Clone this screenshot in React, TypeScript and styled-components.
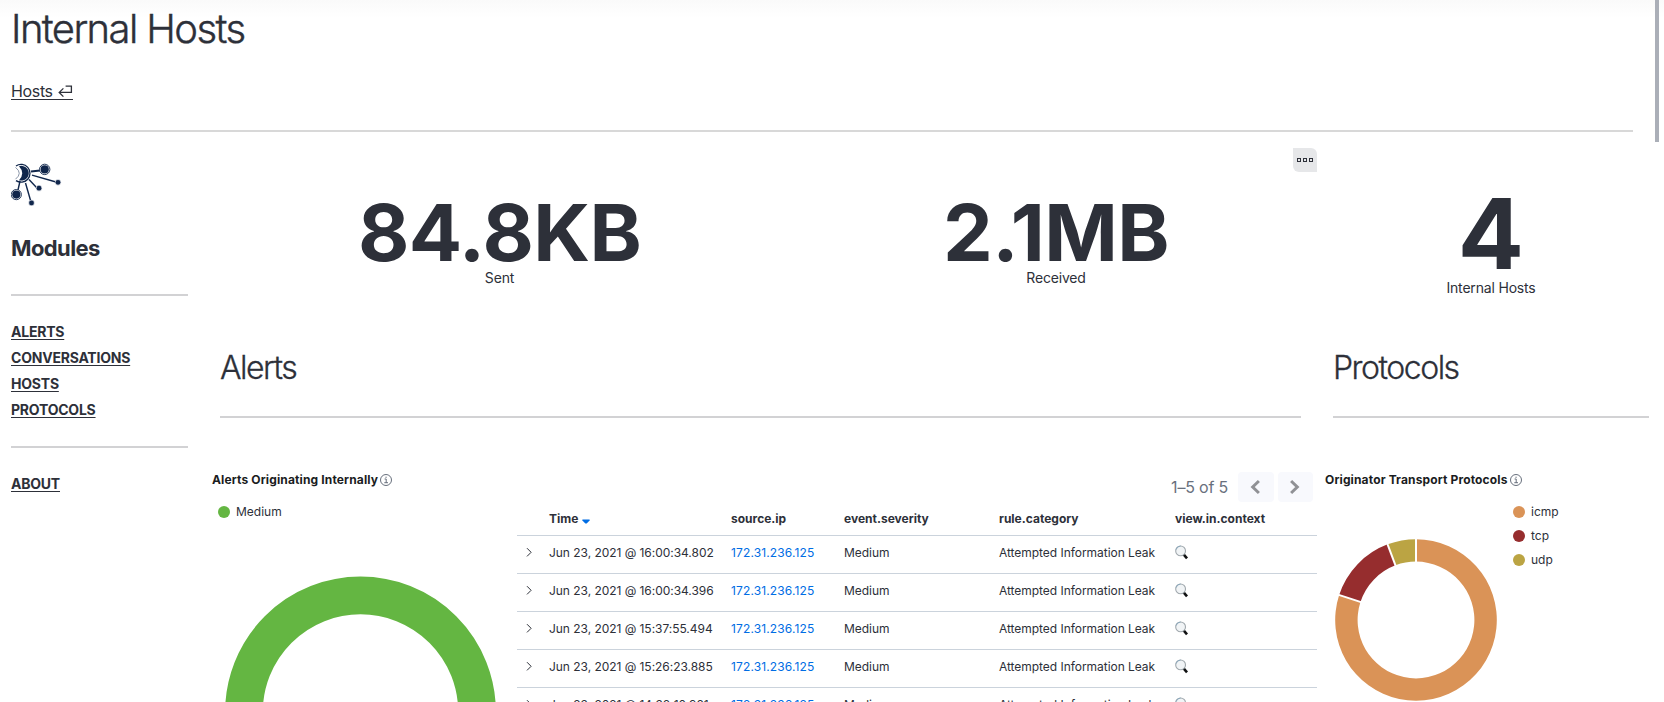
import React from "react";
import styled, { createGlobalStyle } from "styled-components";

const Global = createGlobalStyle`
  * { box-sizing: border-box; }
  html, body { margin: 0; padding: 0; overflow: hidden; }
  body {
    font-family: Inter, "Liberation Sans", sans-serif;
    color: #2d3039;
    background: #fff;
    -webkit-font-smoothing: antialiased;
  }
  h1, h2, h3, p { margin: 0; font-weight: inherit; }
  svg { display: block; flex: none; }
`;

const Page = styled.div`
  position: relative;
  width: 1664px;
  height: 702px;
  overflow: hidden;
  background: linear-gradient(#fafafa, #fff 18px);
`;

const ScrollThumb = styled.div`
  position: absolute;
  top: 0;
  right: 5px;
  width: 4px;
  height: 142px;
  background: #abafb8;
`;

const Header = styled.header`
  height: 132px;
  margin: 0 31px 0 11px;
  border-bottom: 2px solid #d8d8d8;
`;

const Title = styled.h1`
  padding-top: 4px;
  font-size: 40px;
  line-height: 50px;
  font-weight: 300;
  letter-spacing: -1.6px;
  -webkit-text-stroke: 0.4px currentColor;
  white-space: nowrap;
`;

const Crumb = styled.a`
  display: inline-flex;
  align-items: center;
  gap: 5px;
  height: 19px;
  margin-top: 27px;
  padding-top: 2px;
  border-bottom: 1px solid #2d3039;
  font-size: 16px;
  line-height: 24px;
  letter-spacing: -0.35px;
`;

const Body = styled.div`
  display: flex;
  align-items: flex-start;
  height: 570px;
`;

const Sidebar = styled.nav`
  width: 177px;
  margin: 31px 24px 0 11px;
`;

const SideTitle = styled.h2`
  height: 88px;
  padding-top: 25px;
  border-bottom: 2px solid #d2d2d4;
  font-size: 22px;
  line-height: 30px;
  font-weight: 700;
  letter-spacing: -0.6px;
`;

const SideLinks = styled.div<{ $last?: boolean }>`
  display: flex;
  flex-direction: column;
  height: 152px;
  padding-top: 23px;
  border-bottom: ${(p) => (p.$last ? "none" : "2px solid #d2d2d4")};
`;

const SideLink = styled.a`
  height: 26px;
  font-size: 14px;
  line-height: 26px;
  font-weight: 700;
  letter-spacing: -0.22px;
  text-decoration: underline;
  text-underline-offset: 2px;
  text-decoration-thickness: 1px;
`;

const Column = styled.section<{ $width: number; $gap?: number }>`
  width: ${(p) => p.$width}px;
  margin-right: ${(p) => p.$gap ?? 0}px;
`;

const MetricRow = styled.div`
  position: relative;
  display: flex;
  height: 194px;
`;

const Metric = styled.div<{ $width: number; $top: number }>`
  flex: none;
  width: ${(p) => p.$width}px;
  padding-top: ${(p) => p.$top}px;
  text-align: center;
`;

const MetricValue = styled.div<{ $size: number; $height: number; $spacing?: number }>`
  height: ${(p) => p.$height}px;
  font-size: ${(p) => p.$size}px;
  line-height: ${(p) => p.$size}px;
  letter-spacing: ${(p) => p.$spacing ?? 0}px;
  font-weight: 700;
  white-space: nowrap;
`;

const MetricLabel = styled.div`
  font-size: 14px;
  line-height: 20px;
  letter-spacing: -0.18px;
`;

const PanelMenu = styled.button`
  position: absolute;
  top: 16px;
  right: 0;
  display: flex;
  align-items: center;
  justify-content: center;
  gap: 2px;
  width: 24px;
  height: 24px;
  padding: 0;
  border: 0;
  border-radius: 0 6px 0 6px;
  background: #e6e7e9;
  i { width: 4px; height: 4px; border: 1px solid #2d3039; }
`;

const SectionTitle = styled.h2<{ $right: number }>`
  height: 92px;
  margin: 0 ${(p) => p.$right}px 0 8px;
  padding-top: 22px;
  border-bottom: 2px solid #d2d2d4;
  font-size: 32px;
  line-height: 40px;
  font-weight: 300;
  letter-spacing: -1.5px;
  -webkit-text-stroke: 0.3px currentColor;
`;

const PanelBody = styled.div`
  display: flex;
  height: 284px;
`;

const ChartPanel = styled.div<{ $width: number }>`
  width: ${(p) => p.$width}px;
  padding-top: 54px;
`;

const PanelTitle = styled.h3`
  display: flex;
  align-items: center;
  gap: 2px;
  height: 16px;
  font-size: 12px;
  line-height: 16px;
  font-weight: 700;
  letter-spacing: 0.14px;
  color: #1a1c21;
  white-space: nowrap;
`;

const Legend = styled.div`
  padding: 12px 0 0 6px;
`;

const LegendItem = styled.div<{ $color: string }>`
  display: flex;
  align-items: center;
  gap: 6px;
  height: 24px;
  font-size: 12px;
  line-height: 14px;
  &::before {
    content: "";
    width: 12px;
    height: 12px;
    border-radius: 50%;
    background: ${(p) => p.$color};
  }
  span { padding-bottom: 1px; }
`;

const ProtocolChart = styled.div`
  display: flex;
  gap: 10px;
  padding-left: 10px;
  svg { margin-top: 51px; }
`;

const TablePanel = styled.div`
  flex: none;
  width: 800px;
  padding-top: 54px;
`;

const Pager = styled.div`
  display: flex;
  justify-content: flex-end;
  align-items: center;
  gap: 4px;
  height: 30px;
  padding-right: 4px;
  font-size: 16px;
  color: #69707d;
  span { margin-right: 6px; letter-spacing: -0.2px; }
`;

const PagerButton = styled.button<{ $width: number }>`
  display: flex;
  align-items: center;
  justify-content: center;
  width: ${(p) => p.$width}px;
  height: 30px;
  padding: 0 2px 0 0;
  border: 0;
  border-radius: 4px;
  background: #f8f9fd;
`;

const Row = styled.div<{ $head?: boolean }>`
  display: grid;
  grid-template-columns: 32px 182px 113px 155px 176px 1fr;
  align-items: center;
  height: ${(p) => (p.$head ? 34 : 38)}px;
  padding-bottom: ${(p) => (p.$head ? 0 : 5)}px;
  border-bottom: 1px solid #cbd3dc;
  font-size: 12px;
  font-weight: ${(p) => (p.$head ? 700 : 400)};
  letter-spacing: ${(p) => (p.$head ? 0 : -0.04)}px;
  white-space: nowrap;
  > span { display: flex; align-items: center; }
`;

const ExpandCell = styled.span`
  padding: 0 0 0 9px;
`;

const SortMark = styled.i`
  padding: 5px 0 0 1px;
`;

const IpLink = styled.a`
  color: #006de4;
  letter-spacing: 0.13px;
`;

const ModulesLogo = () => (
  <svg width="51" height="45" viewBox="0 0 51 45" fill="none">
    <g stroke="#10264b" strokeWidth="1.4">
      <path d="M20 8.6 L29 7.6" strokeWidth="2" />
      <path d="M21 12.2 L45 19" />
      <path d="M18 16.5 L26 25" />
      <path d="M14.5 20 L20 39" />
      <path d="M9 18 L7 27" />
    </g>
    <circle cx="33.7" cy="6.4" r="5.2" fill="#fff" stroke="#10264b" strokeWidth=".9" />
    <circle cx="33.7" cy="6.4" r="4.1" fill="#10264b" />
    <circle cx="5.3" cy="31.6" r="5.1" fill="#fff" stroke="#10264b" strokeWidth=".9" />
    <circle cx="5.3" cy="31.6" r="4.1" fill="#10264b" />
    {[[47, 19.3], [28, 25.2], [20.5, 39.9]].map(([x, y]) => (
      <g key={x}>
        <circle cx={x} cy={y} r="3.1" fill="#c2c8d3" />
        <circle cx={x} cy={y} r="2.4" fill="#10264b" />
      </g>
    ))}
    <path d="M5 3 A8.9 8.9 0 1 1 5 17.6" stroke="#10264b" strokeWidth="1.3" />
    <path d="M8 3.2 A7.4 7.4 0 1 1 8 17.2 Q14.5 10.2 8 3.2Z" fill="#10264b" />
    <path d="M4.5 4.4 Q12 10.2 4.5 16.2" stroke="#6b7890" strokeWidth=".8" />
  </svg>
);

const ReturnIcon = () => (
  <svg width="15" height="13" viewBox="0 0 15 13" fill="none" stroke="#2d3039" strokeWidth="1.3">
    <path d="M7.6 1.2 H13.4 V7.4 H1.7 M5.4 3.4 L1.2 7.4 L5.4 11.6" />
  </svg>
);

const InfoIcon = () => (
  <svg width="12" height="12" viewBox="0 0 12 12" fill="none" stroke="#5f6775" strokeWidth=".95">
    <circle cx="6" cy="6" r="5.5" />
    <path d="M4.6 5 H6.2 V8.7 M4.3 8.7 H8" />
    <rect x="5.5" y="2.7" width="1.1" height="1.1" fill="#5f6775" stroke="none" />
  </svg>
);

const ExpandIcon = () => (
  <svg width="8" height="11" viewBox="0 0 8 11" fill="none" stroke="#2d3039" strokeWidth="1">
    <path d="M1 1.2 L5.1 5.3 L1 9.4" />
  </svg>
);

const SortIcon = () => (
  <svg width="8" height="5" viewBox="0 0 8 5">
    <path d="M.4 .5 H7.6 V1.4 L4.6 4.6 H3.4 L.4 1.4Z" fill="#006de4" />
  </svg>
);

const PageArrow = ({ next }: { next?: boolean }) => (
  <svg width="12" height="16" viewBox="0 0 12 16" fill="none" stroke="#909195" strokeWidth="3">
    <path d={next ? "M2.1 2 L8.3 8 L2.1 14" : "M9.9 2 L3.7 8 L9.9 14"} />
  </svg>
);

const SearchIcon = () => (
  <svg width="14" height="15" viewBox="0 0 14 15">
    <path d="M8.4 9.2 L12 13.4" stroke="#101112" strokeWidth="2.6" />
    <circle cx="5.6" cy="5.9" r="4.9" fill="#f1f4f6" stroke="#a0a8ad" strokeWidth="1.1" />
    <path d="M1 4.6 A5 5 0 0 1 5.6 1" fill="none" stroke="#8ba9bd" strokeWidth="1" />
  </svg>
);

type Slice = { name: string; from: number; to: number; color: string };

const protocols: Slice[] = [
  { name: "icmp", from: 0, to: 288, color: "#da9357" },
  { name: "tcp", from: 288, to: 339.4, color: "#962d2e" },
  { name: "udp", from: 339.4, to: 360, color: "#bba443" },
];

const point = (r: number, deg: number) => {
  const a = (deg * Math.PI) / 180;
  return `${81 + r * Math.sin(a)} ${81 - r * Math.cos(a)}`;
};

const ProtocolDonut = () => (
  <svg width="162" height="162" viewBox="0 0 162 162">
    {protocols.map(({ name, from, to, color }) => {
      const big = to - from > 180 ? 1 : 0;
      return (
        <path
          key={name}
          fill={color}
          d={`M${point(80.8, from)} A80.8 80.8 0 ${big} 1 ${point(80.8, to)} L${point(58.4, to)} A58.4 58.4 0 ${big} 0 ${point(58.4, from)}Z`}
        />
      );
    })}
    {protocols.map(({ name, from }) => (
      <path key={name} d={`M${point(57, from)} L${point(82, from)}`} stroke="#fff" strokeWidth="2" />
    ))}
  </svg>
);

const SeverityDonut = () => (
  <svg width="298" height="178" viewBox="0 0 298 178">
    <circle cx="148.5" cy="188" r="116.55" fill="none" stroke="#64b642" strokeWidth="37.7" />
  </svg>
);

const times = ["16:00:34.802", "16:00:34.396", "15:37:55.494", "15:26:23.885", "14:38:10.981"];

export default function App() {
  return (
    <Page>
      <Global />
      <Header>
        <Title>Internal Hosts</Title>
        <Crumb>
          Hosts <ReturnIcon />
        </Crumb>
      </Header>
      <Body>
        <Sidebar>
          <ModulesLogo />
          <SideTitle>Modules</SideTitle>
          <SideLinks>
            {["ALERTS", "CONVERSATIONS", "HOSTS", "PROTOCOLS"].map((l) => (
              <SideLink key={l}>{l}</SideLink>
            ))}
          </SideLinks>
          <SideLinks $last>
            <SideLink>ABOUT</SideLink>
          </SideLinks>
        </Sidebar>

        <Column $width={1105} $gap={8}>
          <MetricRow>
            <Metric $width={575} $top={61}>
              <MetricValue $size={79} $height={75} $spacing={-0.6}>84.8KB</MetricValue>
              <MetricLabel>Sent</MetricLabel>
            </Metric>
            <Metric $width={538} $top={61}>
              <MetricValue $size={79} $height={75} $spacing={-0.6}>2.1MB</MetricValue>
              <MetricLabel>Received</MetricLabel>
            </Metric>
            <PanelMenu aria-label="Panel options">
              <i />
              <i />
              <i />
            </PanelMenu>
          </MetricRow>
          <SectionTitle $right={16}>Alerts</SectionTitle>
          <PanelBody>
            <ChartPanel $width={305}>
              <PanelTitle>
                Alerts Originating Internally <InfoIcon />
              </PanelTitle>
              <Legend>
                <LegendItem $color="#64b642">
                  <span>Medium</span>
                </LegendItem>
              </Legend>
              <SeverityDonut />
            </ChartPanel>
            <TablePanel>
              <Pager>
                <span>1–5 of 5</span>
                <PagerButton $width={36} aria-label="Previous page">
                  <PageArrow />
                </PagerButton>
                <PagerButton $width={35} aria-label="Next page">
                  <PageArrow next />
                </PagerButton>
              </Pager>
              <Row $head>
                <span />
                <span>
                  Time&nbsp;
                  <SortMark>
                    <SortIcon />
                  </SortMark>
                </span>
                <span>source.ip</span>
                <span>event.severity</span>
                <span>rule.category</span>
                <span>view.in.context</span>
              </Row>
              {times.map((t) => (
                <Row key={t}>
                  <ExpandCell>
                    <ExpandIcon />
                  </ExpandCell>
                  <span>Jun 23, 2021 @ {t}</span>
                  <IpLink>172.31.236.125</IpLink>
                  <span>Medium</span>
                  <span>Attempted Information Leak</span>
                  <span>
                    <SearchIcon />
                  </span>
                </Row>
              ))}
            </TablePanel>
          </PanelBody>
        </Column>

        <Column $width={332}>
          <MetricRow>
            <Metric $width={332} $top={53}>
              <MetricValue $size={98} $height={93}>4</MetricValue>
              <MetricLabel>Internal Hosts</MetricLabel>
            </Metric>
          </MetricRow>
          <SectionTitle $right={8}>Protocols</SectionTitle>
          <ChartPanel $width={332}>
            <PanelTitle>
              Originator Transport Protocols <InfoIcon />
            </PanelTitle>
            <ProtocolChart>
              <ProtocolDonut />
              <Legend>
                {protocols.map((p) => (
                  <LegendItem key={p.name} $color={p.color}>
                    <span>{p.name}</span>
                  </LegendItem>
                ))}
              </Legend>
            </ProtocolChart>
          </ChartPanel>
        </Column>
      </Body>
      <ScrollThumb />
    </Page>
  );
}
